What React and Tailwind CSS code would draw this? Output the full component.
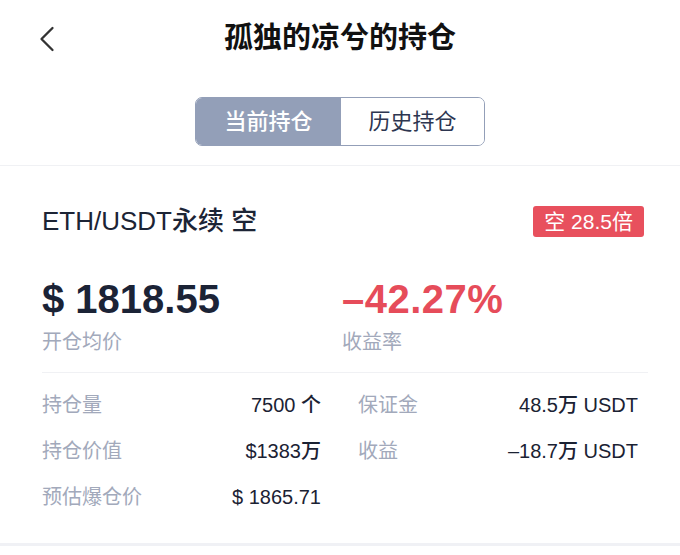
import React from 'react';

const font = { fontFamily: '"Liberation Sans", "Noto Sans CJK SC", sans-serif' };

const rows = [
  ['持仓量', '7500 个', '保证金', '48.5万 USDT'],
  ['持仓价值', '$1383万', '收益', '–18.7万 USDT'],
  ['预估爆仓价', '$ 1865.71', '', ''],
];

export default function App() {
  return (
    <div className="w-[680px] h-[555px] bg-white overflow-hidden" style={font}>
      <div className="grid grid-cols-[1fr_auto_1fr] items-center h-[76px]">
        <div className="pl-[39px] pt-[1px]">
          <svg width="16" height="26" viewBox="0 0 16 26" fill="none">
            <polyline points="13.5,2 2.5,13 13.5,24" stroke="#333" strokeWidth="2.3" strokeLinecap="round" strokeLinejoin="round" />
          </svg>
        </div>
        <h1 className="text-[29px] font-bold text-[#111] leading-none">孤独的凉兮的持仓</h1>
        <div />
      </div>

      <div className="flex justify-center mt-[21px]">
        <div className="flex w-[290px] h-[49px] border-[1.5px] border-[#939fb8] rounded-[7px] overflow-hidden">
          <div className="w-[145px] bg-[#939fb8] text-white text-[22px] font-medium flex items-center justify-center">当前持仓</div>
          <div className="flex-1 bg-white text-[#2d3650] text-[22px] flex items-center justify-center">历史持仓</div>
        </div>
      </div>

      <div className="mt-[19px] h-px bg-[#f0f1f4]" />

      <div className="pl-[42px] pr-[32px]">
        <div className="mt-[40px] h-[31px] flex items-center justify-between pr-[4px]">
          <span className="text-[26px] font-medium text-[#1c2435]">ETH/USDT永续 空</span>
          <span className="h-[31px] px-[11px] rounded-[3px] bg-[#e8505d] text-white text-[21px] flex items-center">空 28.5倍</span>
        </div>

        <div className="grid grid-cols-[300px_1fr] mt-[39px]">
          <div className="text-[40px] leading-[46px] font-semibold text-[#1b2336]">$ 1818.55</div>
          <div className="text-[40px] leading-[46px] font-semibold text-[#e64c5a] tracking-[0.5px]">–42.27%</div>
        </div>
        <div className="grid grid-cols-[300px_1fr] mt-[7px] text-[20px] leading-[26px] text-[#a2a9bb]">
          <div>开仓均价</div>
          <div>收益率</div>
        </div>

        <div className="mt-[17px] h-px bg-[#f0f1f4]" />

        <div className="mt-[9px] grid grid-cols-[279px_280px] gap-x-[37px]">
          {rows.map(([l1, v1, l2, v2]) => (
            <React.Fragment key={l1}>
              <div className="h-[46px] flex items-center justify-between">
                <span className="text-[20px] text-[#a2a9bb]">{l1}</span>
                <span className="text-[20px] font-medium text-[#1b2233]">{v1}</span>
              </div>
              <div className="h-[46px] flex items-center justify-between">
                <span className="text-[20px] text-[#a2a9bb]">{l2}</span>
                <span className="text-[20px] font-medium text-[#1b2233]">{v2}</span>
              </div>
            </React.Fragment>
          ))}
        </div>
      </div>

      <div className="mt-[23px] h-[3px] bg-[#f0f1f5]" />
    </div>
  );
}
